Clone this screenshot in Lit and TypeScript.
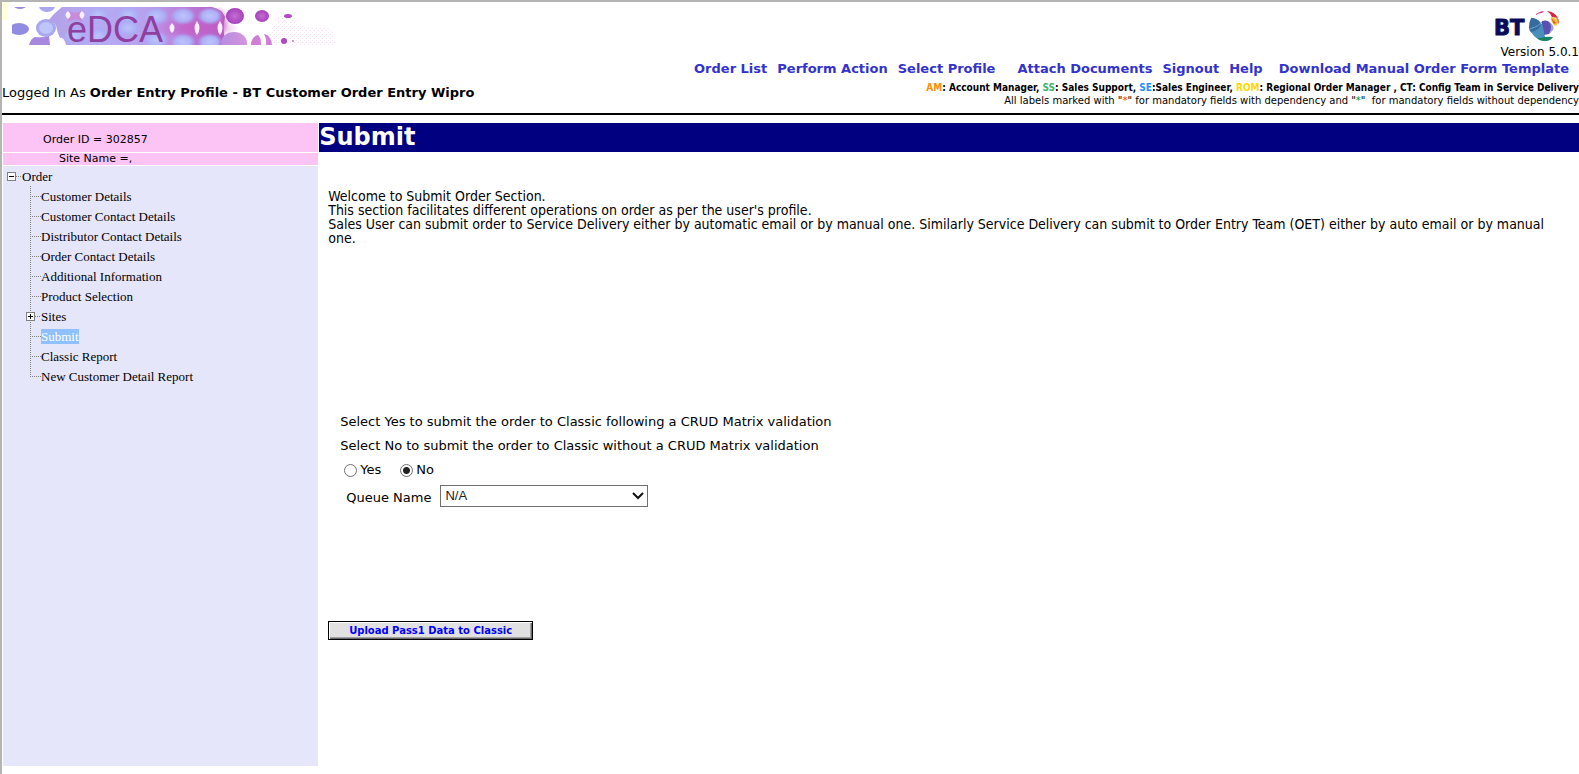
import { LitElement, html, css, svg } from "lit";
import { customElement, property, state } from "lit/decorators.js";

@customElement("edca-banner")
class EdcaBanner extends LitElement {
  static styles = css`
    :host { display: block; }
    svg { display: block; }
  `;

  render() {
    const lights = [[96, 13], [126, 13], [154, 14], [181, 14], [208, 14], [72, 34], [96, 34], [126, 26], [154, 38], [181, 40], [208, 40]];
    const gaps = [[66, 13, 4], [80, 13, 4], [170, 26, 5], [195, 26, 7], [218, 26, 7]];
    return html`
      <svg width="340" height="54" viewBox="0 0 340 54" role="img" aria-label="eDCA">
        <defs>
          <linearGradient id="band" x1="0" x2="1">
            <stop offset="0" stop-color="#b39fe6" />
            <stop offset="0.25" stop-color="#b5abf3" />
            <stop offset="0.55" stop-color="#b7a1ee" />
            <stop offset="0.75" stop-color="#bd80da" />
            <stop offset="1" stop-color="#ae5bc4" />
          </linearGradient>
          <linearGradient id="low" x1="0" x2="1">
            <stop offset="0" stop-color="#b98be0" />
            <stop offset="1" stop-color="#d295df" />
          </linearGradient>
          <radialGradient id="cell">
            <stop offset="0" stop-color="#bcc4fb" />
            <stop offset="0.6" stop-color="#aeb0f6" />
            <stop offset="1" stop-color="#a9a8f3" stop-opacity="0" />
          </radialGradient>
          <radialGradient id="ball">
            <stop offset="0" stop-color="#c46fd2" />
            <stop offset="1" stop-color="#a63fbd" />
          </radialGradient>
          <radialGradient id="glow">
            <stop offset="0" stop-color="#c55cc6" />
            <stop offset="1" stop-color="#c55cc6" stop-opacity="0" />
          </radialGradient>
          <pattern id="dots" width="4" height="4" patternUnits="userSpaceOnUse">
            <rect width="1" height="1" fill="#f6d9f2" />
            <rect x="2" y="2" width="1" height="1" fill="#faeaf8" />
          </pattern>
          <clipPath id="frame"><rect x="10" y="5" width="325" height="38" /></clipPath>
        </defs>
        <rect width="6" height="18" fill="#ffffdc" />
        <g clip-path="url(#frame)">
          <path d="M276 14h14l12 12h28l4 17h-72z" fill="url(#dots)" />
          <ellipse cx="18" cy="4" rx="6" ry="3" fill="#9a86dc" />
          <ellipse cx="45" cy="4" rx="8" ry="6" fill="#aba7ee" />
          <ellipse cx="17" cy="27" rx="10" ry="6" fill="#918ce2" />
          <ellipse cx="44" cy="26" rx="10" ry="9" fill="#a7a6ee" />
          <ellipse cx="44" cy="26" rx="7" ry="6" fill="#bec5fa" />
          <path d="M46 19q6-8 14-14H210q10 2 13 10q-3 12 1 28H64q-2-9-6-7q-2-4-3-8q0-8-9-9z" fill="url(#band)" />
          <path d="M27 43q2-7 6-8q9 1 14-1l1 9z" fill="#a888df" />
          <ellipse cx="195" cy="26" rx="42" ry="12" fill="url(#glow)" />
          <ellipse cx="218" cy="20" rx="9" ry="16" fill="url(#glow)" />
          ${lights.map(([x, y]) => svg`<ellipse cx=${x} cy=${y} rx="13" ry="9" fill="url(#cell)" />`)}
          <path d="M65 8q8 6 16 0l-4 6 4 6q-8-5-16 0l4-6z" fill="#c98ad8" />
          ${gaps.map(([x, y, r]) => svg`<path d="M${x} ${y - r}q-5 ${r} 0 ${r * 2}q5-${r} 0-${r * 2}z" fill="#f7effd" />`)}
          <ellipse cx="233" cy="14" rx="9" ry="8" fill="url(#ball)" />
          <ellipse cx="260" cy="14" rx="7" ry="6" fill="url(#ball)" />
          <ellipse cx="286" cy="14" rx="4" ry="2" fill="#b04ac0" />
          <ellipse cx="232" cy="41" rx="13" ry="11" fill="url(#low)" />
          <path d="M249 43q0-8 7-10q3 2 3 10zM262 32q7 1 8 11h-6q1-6-2-11z" fill="#d17cd6" />
          <circle cx="282" cy="39" r="3" fill="#ac49bd" />
          <circle cx="291" cy="39" r="1" fill="#c47acb" />
        </g>
        <text x="65" y="40" font-family="Liberation Sans, Arial, sans-serif" font-size="36" fill="#8f3f9f">eDCA</text>
      </svg>
    `;
  }
}

@customElement("bt-logo")
class BtLogo extends LitElement {
  static styles = css`
    :host { display: block; }
    svg { display: block; }
  `;

  render() {
    return html`
      <svg width="66" height="32" viewBox="0 0 66 32" role="img" aria-label="BT">
        <text x="-1" y="24" font-family="DejaVu Sans, Verdana, sans-serif" font-weight="700" font-size="21" fill="#0b0b58" stroke="#0b0b58">BT</text>
        <path d="M41 3q5-3 8-3l-2 2q-4 0-6 2z" fill="#d82f7c" />
        <path d="M52 0q8 1 11 7l-6-1q-2-4-5-6z" fill="#dc2440" />
        <path d="M61 6q4 2 3 7l-2-2z" fill="#e97a5f" />
        <path d="M56 6q5 0 7 5q0 3-3 4q-4-3-4-9z" fill="#f3c437" />
        <path d="M56 7l5 5-2 1z" fill="#e8472f" />
        <path d="M37 7q9 1 11 10q0 8 4 13q-9 0-14-7q-5-8-1-16z" fill="#3c7fb4" />
        <path d="M47 10q6-2 9 3q2 6-2 10l-5 1q-3-7-2-14z" fill="#5a50b0" />
        <path d="M54 11q4 4 0 12l4-4q2-5-4-8z" fill="#a89ad6" />
        <path d="M36 7q6 0 9 5q1 6-3 10q-7 2-8-5q0-6 2-10z" fill="#356b9f" />
        <path d="M36 21q8-1 11-9l2 9q0 6 5 8q-11 3-18-8z" fill="#4a8fb9" />
        <path d="M35 18q8-2 12-7" fill="none" stroke="#6aa6cc" />
        <path d="M46 27q6-2 12-1q-2 4-8 4q-6 0-8-3z" fill="#15835f" />
      </svg>
    `;
  }
}

interface TreeItem {
  label: string;
  expandable?: boolean;
}

@customElement("order-tree")
class OrderTree extends LitElement {
  @property() selected = "Submit";

  static styles = css`
    :host {
      display: block;
      font: 13px/20px "Liberation Serif", "Times New Roman", serif;
      color: #000;
    }
    ul { list-style: none; margin: 0; padding: 0 0 0 27px; }
    .root, .item { display: flex; align-items: center; height: 20px; }
    .root { padding-left: 4px; }
    .item {
      background: repeating-linear-gradient(#808080 0 1px, transparent 1px 2px) 0 0 / 1px 100% no-repeat;
    }
    .item:last-child { background-size: 1px 11px; }
    .dots {
      width: 11px;
      height: 1px;
      background: repeating-linear-gradient(90deg, #808080 0 1px, transparent 1px 2px);
    }
    .dots.short { width: 6px; }
    .toggle {
      width: 9px;
      height: 9px;
      padding: 0;
      border: 1px solid #808080;
      background: #fff;
      display: grid;
      place-items: center;
    }
    .item .toggle { margin-left: -4px; }
    .toggle svg { display: block; }
    a { color: inherit; text-decoration: none; line-height: 15px; }
    a.selected { background: #8fc0ff; color: #fff; }
  `;

  private items: TreeItem[] = [
    { label: "Customer Details" },
    { label: "Customer Contact Details" },
    { label: "Distributor Contact Details" },
    { label: "Order Contact Details" },
    { label: "Additional Information" },
    { label: "Product Selection" },
    { label: "Sites", expandable: true },
    { label: "Submit" },
    { label: "Classic Report" },
    { label: "New Customer Detail Report" },
  ];

  private toggle(label: string, plus: boolean) {
    return html`
      <button class="toggle" aria-label="${plus ? "Expand" : "Collapse"} ${label}">
        <svg width="7" height="7" shape-rendering="crispEdges">
          <path d=${plus ? "M1 3h5v1h-5zM3 1h1v5h-1z" : "M1 3h5v1h-5z"} />
        </svg>
      </button>
      <span class="dots short"></span>`;
  }

  render() {
    return html`
      <div class="root">${this.toggle("Order", false)}<a href="#">Order</a></div>
      <ul>
        ${this.items.map((item) => html`
          <li class="item">
            ${item.expandable ? this.toggle(item.label, true) : html`<span class="dots"></span>`}
            <a href="#" class=${item.label === this.selected ? "selected" : ""}>${item.label}</a>
          </li>`)}
      </ul>
    `;
  }
}

@customElement("app-root")
class AppRoot extends LitElement {
  @state() private matrix = "no";

  static styles = css`
    :host {
      display: block;
      box-sizing: border-box;
      min-height: 100vh;
      border-top: 2px solid #b4b4b4;
      border-left: 2px solid #b4b4b4;
      background: #fff;
      color: #000;
      font: 13px/14px "DejaVu Sans", Verdana, sans-serif;
      overflow: hidden;
    }
    header {
      display: flex;
      justify-content: space-between;
      border-bottom: 2px solid #000;
      height: 111px;
    }
    .left, .right { display: flex; flex-direction: column; }
    .left { justify-content: space-between; }
    .user { margin: 0 0 12px; line-height: 16px; }
    .right { align-items: flex-end; white-space: nowrap; }
    bt-logo { margin: 9px 18px 0 0; }
    .version { font-size: 12px; line-height: 14px; margin-top: 2px; }
    nav { display: flex; gap: 10px; padding-right: 10px; margin-top: 1px; line-height: 18px; }
    nav a { color: #3333cc; font-weight: 700; text-decoration: none; }
    nav .apart { margin-left: 12px; }
    nav .near { margin-left: 6px; }
    .legend { font: 700 10px/12px "DejaVu Sans Condensed", Tahoma, sans-serif; margin: 4px 0 0; }
    .note { font-size: 10px; line-height: 13px; margin: 0; }
    .am { color: #ff8c00; }
    .ss { color: #3cb371; }
    .se { color: #1e90ff; }
    .rom { color: #ffd700; }
    .red { color: #ff3300; }
    .green { color: #009900; }
    .body { display: flex; align-items: flex-start; gap: 1px; padding: 8px 0 8px 1px; }
    aside { flex: 0 0 20%; display: flex; flex-direction: column; gap: 1px; font-size: 11px; }
    .order-id { background: #fcc4f4; padding: 9px 0 5px 40px; line-height: 15px; }
    .site { background: #fcc4f4; padding-left: 56px; line-height: 12px; }
    .tree { background: #e6e6fa; min-height: calc(100vh - 174px); }
    main { flex: 1; min-width: 0; }
    h1 { margin: 0; background: #000080; color: #fff; font-size: 24px; line-height: 29px; font-weight: 700; }
    .intro { margin: 37px 20px 0 9px; font: 14px/14px "DejaVu Sans Condensed", Verdana, sans-serif; }
    .intro p { margin: 0; }
    form { margin-top: 165px; padding-left: 9px; }
    .hint { margin: 0 0 0 12px; line-height: 24px; }
    .radios { display: flex; gap: 19px; margin-left: 16px; height: 24px; }
    .radios label { display: flex; align-items: center; gap: 3px; }
    input[type="radio"] {
      appearance: none;
      width: 13px;
      height: 13px;
      margin: 0;
      border: 1px solid #707070;
      border-radius: 50%;
      background: #fff;
    }
    input[type="radio"]:checked { background: radial-gradient(circle, #222 0 3px, #fff 4px); }
    .queue { display: flex; align-items: center; gap: 9px; margin: 3px 0 0 18px; }
    .queue label { padding-top: 4px; }
    select {
      appearance: none;
      width: 208px;
      height: 22px;
      padding: 0 24px 0 4px;
      border: 1px solid #707070;
      border-radius: 0;
      color: #222;
      font: 13px/18px "Liberation Sans", Arial, sans-serif;
      background: #fff url("data:image/svg+xml,%3Csvg xmlns='http://www.w3.org/2000/svg' width='12' height='8'%3E%3Cpath d='M1 1l5 5 5-5' fill='none' stroke='%23111' stroke-width='2'/%3E%3C/svg%3E") no-repeat right 3px center;
    }
    .upload {
      display: block;
      margin-top: 114px;
      width: 205px;
      height: 19px;
      padding: 0;
      border: 1px solid #000;
      box-shadow: inset 1px 1px #fff, inset -1px -1px #696969, inset -2px -2px #a0a0a0;
      background: #e1e1e1;
      color: #0000ff;
      font: 700 10px/12px "DejaVu Sans", Verdana, sans-serif;
    }
  `;

  private choose(value: string) {
    this.matrix = value;
  }

  render() {
    return html`
      <header>
        <div class="left">
          <edca-banner></edca-banner>
          <p class="user">Logged In As <b>Order Entry Profile - BT Customer Order Entry Wipro</b></p>
        </div>
        <div class="right">
          <bt-logo></bt-logo>
          <div class="version">Version 5.0.1</div>
          <nav>
            <a href="#">Order List</a>
            <a href="#">Perform Action</a>
            <a href="#">Select Profile</a>
            <a href="#" class="apart">Attach Documents</a>
            <a href="#">Signout</a>
            <a href="#">Help</a>
            <a href="#" class="near">Download Manual Order Form Template</a>
          </nav>
          <p class="legend"><span class="am">AM</span>: Account Manager, <span class="ss">SS</span>: Sales Support, <span class="se">SE</span>:Sales Engineer, <span class="rom">ROM</span>: Regional Order Manager , CT: Config Team in Service Delivery</p>
          <p class="note">All labels marked with "<span class="red">*</span>" for mandatory fields with dependency and "<span class="green">*</span>"&nbsp; for mandatory fields without dependency</p>
        </div>
      </header>
      <div class="body">
        <aside>
          <div class="order-id">Order ID = 302857</div>
          <div class="site">Site Name =,</div>
          <div class="tree"><order-tree></order-tree></div>
        </aside>
        <main>
          <h1>Submit</h1>
          <div class="intro">
            <p>Welcome to Submit Order Section.</p>
            <p>This section facilitates different operations on order as per the user's profile.</p>
            <p>Sales User can submit order to Service Delivery either by automatic email or by manual one. Similarly Service Delivery can submit to Order Entry Team (OET) either by auto email or by manual one.</p>
          </div>
          <form @submit=${(e: Event) => e.preventDefault()}>
            <p class="hint">Select Yes to submit the order to Classic following a CRUD Matrix validation</p>
            <p class="hint">Select No to submit the order to Classic without a CRUD Matrix validation</p>
            <div class="radios">
              <label><input type="radio" name="matrix" .checked=${this.matrix === "yes"} @change=${() => this.choose("yes")} />Yes</label>
              <label><input type="radio" name="matrix" .checked=${this.matrix === "no"} @change=${() => this.choose("no")} />No</label>
            </div>
            <div class="queue">
              <label for="queue">Queue Name</label>
              <select id="queue"><option>N/A</option></select>
            </div>
            <button class="upload" type="button">Upload Pass1 Data to Classic</button>
          </form>
        </main>
      </div>
    `;
  }
}
